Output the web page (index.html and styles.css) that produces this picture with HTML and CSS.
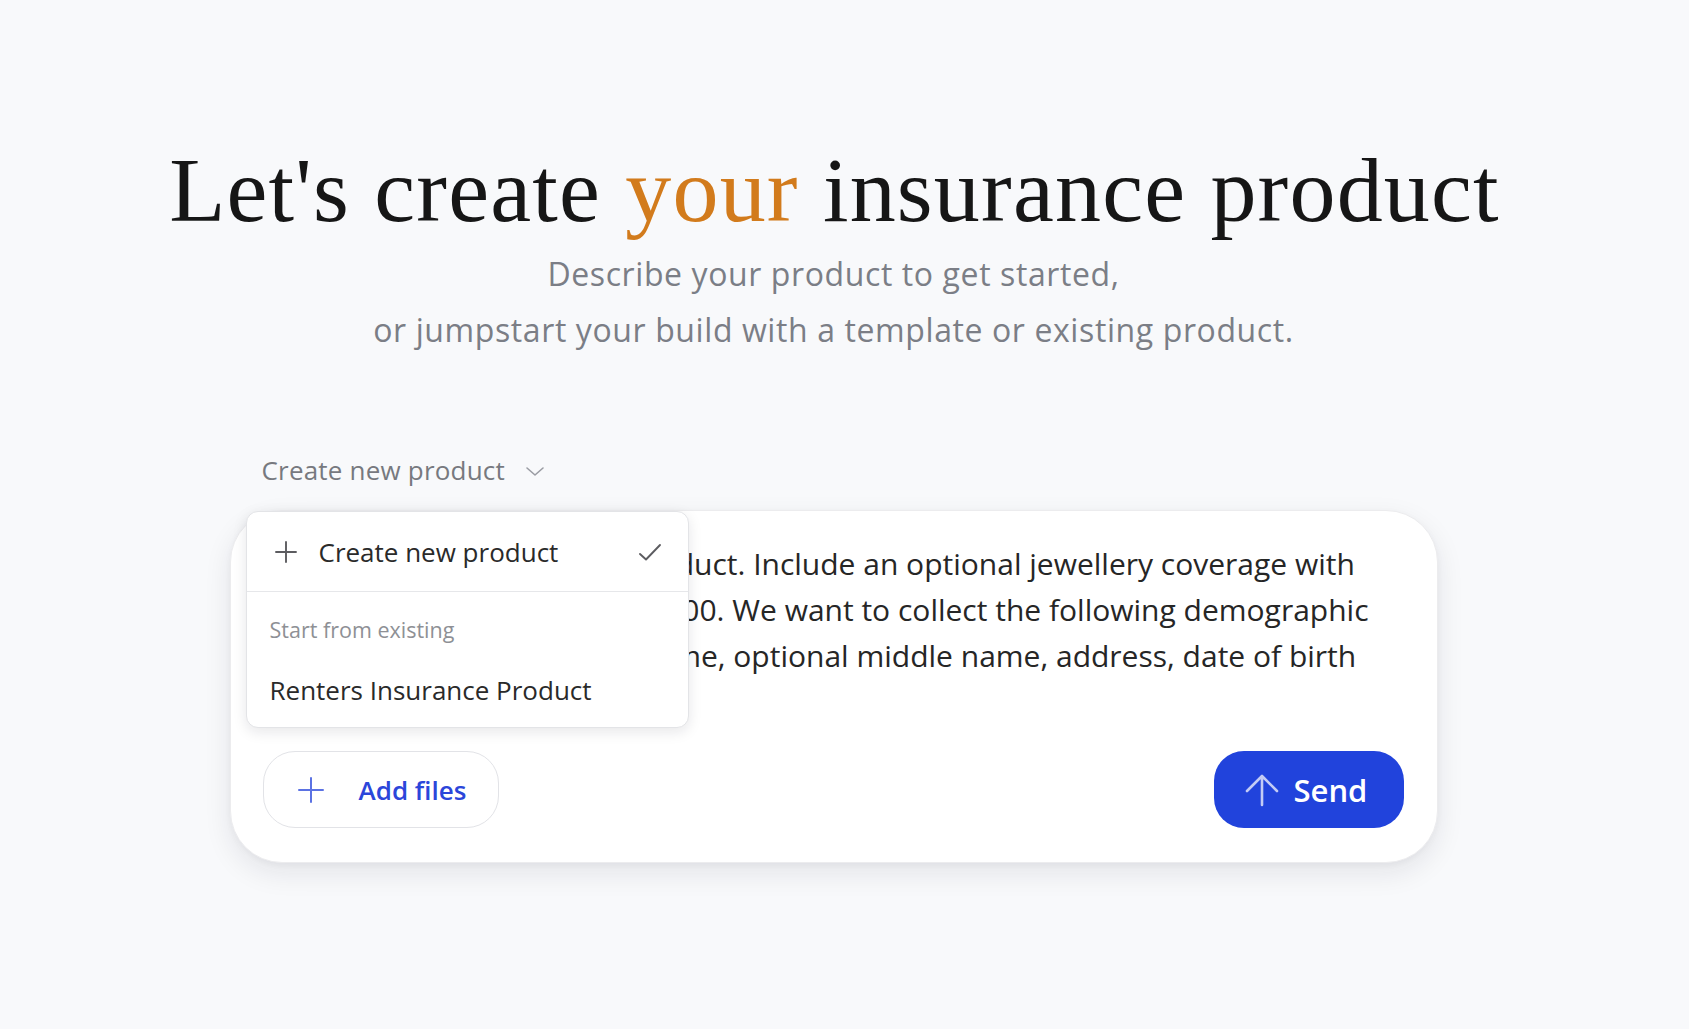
FILE: index.html
```html
<!DOCTYPE html>
<html lang="en">
<head>
<meta charset="utf-8">
<title>Create your insurance product</title>
<link rel="stylesheet" href="styles.css">
</head>
<body>
<main class="page">
  <h1 class="title">Let's create <span class="accent">your</span> insurance product</h1>
  <p class="subtitle">Describe your product to get started,<br>or jumpstart your build with a template or existing product.</p>

  <section class="composer">
    <div class="trigger">
      <span>Create new product</span>
      <svg class="chev" width="20" height="12" viewBox="0 0 20 12"><path d="M2 3 L10 10 L18 3" fill="none" stroke="#9a9ca3" stroke-width="1.6" stroke-linecap="round" stroke-linejoin="round"/></svg>
    </div>

    <div class="card">
      <div class="prompt">Create a condo insurance product. Include an optional jewellery coverage with<br>a maximum claim limit of $5,000. We want to collect the following demographic<br>data fields: first name, last name, optional middle name, address, date of birth<br>and email address.</div>

      <div class="actions">
        <button class="btn-files">
          <svg width="28" height="28" viewBox="0 0 28 28"><path d="M14 2 V26 M2 14 H26" stroke="#5b72e3" stroke-width="2" stroke-linecap="round"/></svg>
          <span>Add files</span>
        </button>
        <button class="btn-send">
          <svg width="36" height="34" viewBox="0 0 36 34"><path d="M18 32 V3 M3 18 L18 3 L33 18" fill="none" stroke="#c3cbf5" stroke-width="2.6" stroke-linecap="round" stroke-linejoin="round"/></svg>
          <span>Send</span>
        </button>
      </div>

      <div class="menu">
        <div class="menu-top">
          <svg width="22" height="22" viewBox="0 0 22 22"><path d="M11 1 V21 M1 11 H21" stroke="#5c5c60" stroke-width="1.9" stroke-linecap="round"/></svg>
          <span class="menu-main">Create new product</span>
          <svg class="check" width="24" height="20" viewBox="0 0 24 20"><path d="M2 12 L8 17.5 L22 3" fill="none" stroke="#5c5c60" stroke-width="1.9" stroke-linecap="round" stroke-linejoin="round"/></svg>
        </div>
        <div class="menu-section">
          <div class="menu-label">Start from existing</div>
          <div class="menu-item">Renters Insurance Product</div>
        </div>
      </div>
    </div>
  </section>
</main>
</body>
</html>
```

FILE: styles.css
```css
* { box-sizing: border-box; }
html, body { margin: 0; padding: 0; }
body {
  background: #f8f9fb;
  font-family: "Open Sans", Lato, sans-serif;
  color: #1f1f1f;
  height: 1029px;
  overflow: hidden;
}
.page {
  display: flex;
  flex-direction: column;
  align-items: center;
  padding-top: 137px;
}
.title {
  margin: 0;
  font-family: "Liberation Serif", serif;
  font-weight: 400;
  font-size: 92px;
  line-height: 106px;
  color: #161616;
  letter-spacing: 1.2px;
  margin-left: -20px;
}
.accent { color: #d27b1c; }
.subtitle {
  margin: 3px 0 0;
  text-align: center;
  font-size: 32px;
  line-height: 56px;
  letter-spacing: 0.6px;
  color: #7b7e86;
  margin-left: -22px;
}
.composer {
  width: 1208px;
  margin-top: 97px;
  margin-left: -22px;
}
.trigger {
  display: flex;
  align-items: center;
  gap: 20px;
  padding-left: 32px;
  font-size: 26px;
  line-height: 30px;
  letter-spacing: 0.2px;
  color: #77797f;
}
.chev { margin-top: 1px; }
.card {
  position: relative;
  margin-top: 25px;
  height: 353px;
  background: #fff;
  border: 1px solid #ececee;
  border-radius: 52px;
  box-shadow: 0 10px 28px rgba(20, 24, 40, 0.09), 0 2px 6px rgba(20, 24, 40, 0.04);
  padding: 30px 33px 34px 32px;
  display: flex;
  flex-direction: column;
}
.prompt {
  height: 210px;
  font-size: 30px;
  line-height: 46px;
  color: #262626;
  white-space: nowrap;
  overflow: hidden;
}
.actions {
  display: flex;
  justify-content: space-between;
  align-items: center;
}
button { font-family: inherit; cursor: pointer; }
.btn-files {
  display: flex;
  align-items: center;
  gap: 34px;
  width: 236px;
  height: 77px;
  padding: 0 0 0 33px;
  border: 1.5px solid #e2e3e7;
  border-radius: 32px;
  background: #fff;
  font-size: 26px;
  font-weight: 600;
  color: #2b46da;
}
.btn-send {
  display: flex;
  align-items: center;
  gap: 14px;
  width: 190px;
  height: 77px;
  padding: 0 0 0 30px;
  border: none;
  border-radius: 30px;
  background: #2143dc;
  font-size: 31px;
  font-weight: 600;
  color: #fff;
}
.menu {
  position: absolute;
  left: 15px;
  top: 0;
  width: 443px;
  height: 217px;
  background: #fff;
  border: 1px solid #e3e4e7;
  border-radius: 12px;
  box-shadow: 0 4px 14px rgba(20, 24, 40, 0.10);
}
.menu-top {
  display: flex;
  align-items: center;
  height: 80px;
  padding: 0 26px 0 28px;
  border-bottom: 1.5px solid #e6e7ea;
}
.menu-main {
  flex: 1;
  margin-left: 22px;
  font-size: 26px;
  color: #2a2a2a;
}
.menu-section {
  padding: 26px 0 0 23px;
}
.menu-label {
  font-size: 21.5px;
  line-height: 24px;
  color: #8e9095;
}
.menu-item {
  margin-top: 33px;
  font-size: 26px;
  line-height: 30px;
  color: #2a2a2a;
}
```
